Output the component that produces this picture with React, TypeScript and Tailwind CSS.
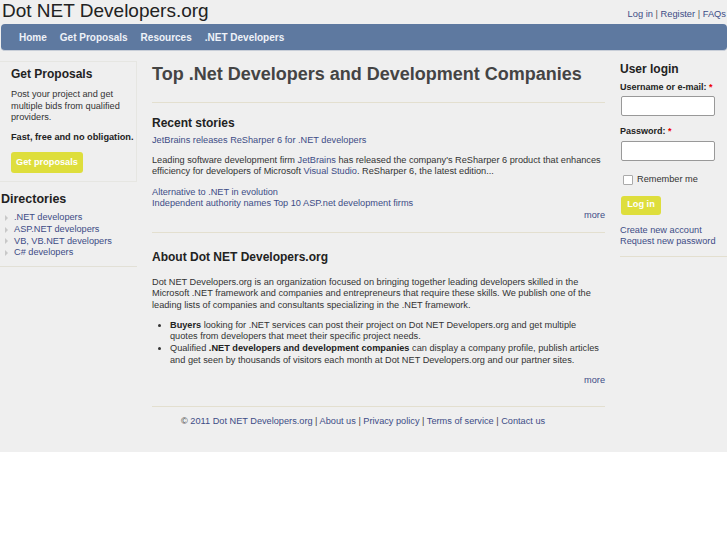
import React from 'react';

const link = 'text-[#3d4c86]';

export default function App() {
  return (
    <div className="bg-white min-h-[545px] font-['Liberation_Sans',Arial,sans-serif] text-[#333]">
      <div className="bg-[#efefef] h-[452px]">
        {/* Header */}
        <div className="flex items-start justify-between h-[24px]">
          <h1 className="text-[19px] leading-[24px] text-[#222] pl-[2px] -mt-[1px]">Dot NET Developers.org</h1>
          <div className={`text-[9.3px] mt-[8px] pr-[1px] ${link}`}>
            Log in <span className="text-[#555]">|</span> Register <span className="text-[#555]">|</span> FAQs
          </div>
        </div>

        {/* Nav */}
        <nav className="ml-[1px] h-[27px] bg-[#5e79a0] rounded-[4px] border-b border-[#c8ced8] flex items-center pl-[18px] gap-[13px] text-[10px] font-bold text-[#eef2f8]">
          <span>Home</span>
          <span>Get Proposals</span>
          <span>Resources</span>
          <span>.NET Developers</span>
        </nav>

        <div className="flex">
          {/* Left sidebar */}
          <aside className="w-[137px] shrink-0 text-[9.2px] leading-[11.6px]">
            <div className="mt-[10px] border-t border-[#e6e6e2] border-r pt-[5px] pl-[11px] pr-[1px] pb-[8px] border-b">
              <h2 className="text-[12px] font-bold leading-[15px] text-[#222] mb-[7px]">Get Proposals</h2>
              <p className="pr-[5px]">Post your project and get multiple bids from qualified providers.</p>
              <p className="font-bold text-[#222] mt-[8px] whitespace-nowrap">Fast, free and no obligation.</p>
              <button className="mt-[9px] bg-[#dede3c] text-white font-bold rounded-[3px] h-[21px] w-[72px] text-[9.2px]">Get proposals</button>
            </div>
            <div className="border-b border-[#e2e0d6] pb-[7px]">
              <h2 className="text-[12.5px] font-bold leading-[16px] text-[#222] pl-[1px] mt-[9px] mb-[5px]">Directories</h2>
              <ul>
                {['.NET developers', 'ASP.NET developers', 'VB, VB.NET developers', 'C# developers'].map((d) => (
                  <li key={d} className="flex items-center">
                    <span className="w-0 h-0 ml-[5px] mr-[6px] border-y-[3px] border-y-transparent border-l-[3px] border-l-[#c8c8c8]" />
                    <span className={link}>{d}</span>
                  </li>
                ))}
              </ul>
            </div>
          </aside>

          {/* Main */}
          <main className="w-[453px] ml-[15px] shrink-0 text-[9.2px] leading-[11.6px]">
            <h1 className="text-[18px] font-bold text-[#444] leading-[22px] mt-[12px] pb-[17px] border-b border-[#e3dfcf]">
              Top .Net Developers and Development Companies
            </h1>
            <h2 className="text-[12px] font-bold leading-[15px] text-[#222] mt-[13px] mb-[4px]">Recent stories</h2>
            <a className={`block ${link}`}>JetBrains releases ReSharper 6 for .NET developers</a>
            <p className="mt-[8px]">
              Leading software development firm <span className={link}>JetBrains</span> has released the company's ReSharper 6 product that enhances efficiency for developers of Microsoft <span className={link}>Visual Studio</span>. ReSharper 6, the latest edition...
            </p>
            <div className="mt-[9px]">
              <a className={`block ${link}`}>Alternative to .NET in evolution</a>
              <a className={`block ${link}`}>Independent authority names Top 10 ASP.net development firms</a>
            </div>
            <div className={`text-right ${link}`}>more</div>
            <div className="border-b border-[#e3dfcf] mt-[10px]" />

            <h2 className="text-[12px] font-bold leading-[15px] text-[#222] mt-[17px]">About Dot NET Developers.org</h2>
            <p className="mt-[12px] leading-[11.7px]">
              Dot NET Developers.org is an organization focused on bringing together leading developers skilled in the Microsoft .NET framework and companies and entrepreneurs that require these skills. We publish one of the leading lists of companies and consultants specializing in the .NET framework.
            </p>
            <ul className="mt-[8px] pl-[18px] list-disc leading-[11.7px]">
              <li>
                <b className="text-[#222]">Buyers</b> looking for .NET services can post their project on Dot NET Developers.org and get multiple quotes from developers that meet their specific project needs.
              </li>
              <li>
                Qualified <b className="text-[#222]">.NET developers and development companies</b> can display a company profile, publish articles and get seen by thousands of visitors each month at Dot NET Developers.org and our partner sites.
              </li>
            </ul>
            <div className={`text-right mt-[9px] ${link}`}>more</div>

            <div className="border-b border-[#e3dfcf] mt-[19px]" />
            <div className={`mt-[9px] pl-[29px] ${link}`}>
              <span className="text-[#444]">©</span> 2011 Dot NET Developers.org <span className="text-[#444]">|</span> About us <span className="text-[#444]">|</span> Privacy policy <span className="text-[#444]">|</span> Terms of service <span className="text-[#444]">|</span> Contact us
            </div>
          </main>

          {/* Right sidebar */}
          <aside className="flex-1 ml-[15px] text-[9.2px] leading-[11.6px]">
            <div className="border-b border-[#e3dfcf] pb-[8px]">
              <h2 className="text-[12px] font-bold leading-[15px] text-[#222] mt-[11px]">User login</h2>
              <label className="block font-bold text-[#222] mt-[5px] text-[9px]">
                Username or e-mail: <span className="text-[#e00]">*</span>
              </label>
              <input className="block mt-[2px] ml-[1px] w-[94px] h-[20px] bg-white border border-[#999] rounded-[2px]" />
              <label className="block font-bold text-[#222] mt-[10px] text-[9px]">
                Password: <span className="text-[#e00]">*</span>
              </label>
              <input type="password" className="block mt-[4px] ml-[1px] w-[94px] h-[20px] bg-white border border-[#999] rounded-[2px]" />
              <div className="flex items-center mt-[13px] ml-[3px]">
                <span className="w-[10px] h-[10px] border border-[#aaa] bg-white rounded-[1px]" />
                <span className="ml-[4px]">Remember me</span>
              </div>
              <button className="mt-[10px] ml-[1px] h-[19px] w-[40px] bg-[#dede3c] rounded-[3px] text-white font-bold text-[9.2px]">Log in</button>
              <div className="mt-[10px]">
                <a className={`block ${link}`}>Create new account</a>
                <a className={`block ${link}`}>Request new password</a>
              </div>
            </div>
          </aside>
        </div>
      </div>
    </div>
  );
}
